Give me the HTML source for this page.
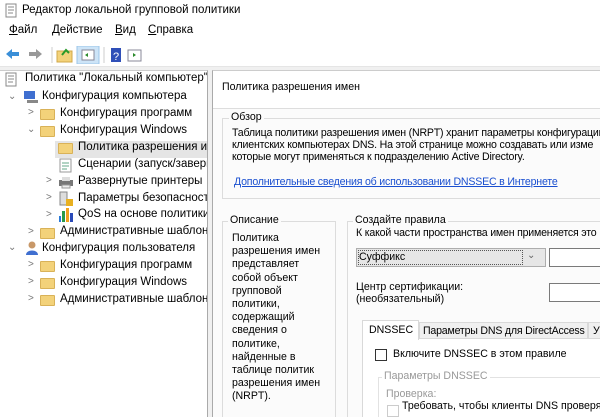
<!DOCTYPE html>
<html><head><meta charset="utf-8"><style>
*{margin:0;padding:0;box-sizing:border-box}
html,body{width:600px;height:417px;overflow:hidden}
body{background:#f0f0f0;font-family:"Liberation Sans","DejaVu Sans",sans-serif;font-size:11.5px;color:#000}
#w{position:relative;width:600px;height:417px;overflow:hidden}
.a{position:absolute;white-space:nowrap}
.s{font-size:10.6px}
.fold{position:absolute;width:15px;height:11px;background:#f3d27a;border:1px solid #d9b258;border-radius:1px}
.chev{position:absolute;font-size:10px;color:#777}
.gb{position:absolute;border:1px solid #dcdcdc}
.gl{position:absolute;background:#fbfbfb;padding:0 2px;font-size:10.6px}
</style></head><body><div id="w">
<div class="a" style="left:0;top:0;width:600px;height:22px;background:#fff"></div>
<svg class="a" style="left:4px;top:3px" width="14" height="15"><rect x="2" y="1" width="10" height="13" fill="#fff" stroke="#888"/><path d="M4 4h6M4 7h6M4 10h5" stroke="#888"/></svg>
<div class="a" style="left:22px;top:4px;font-size:11.5px">Редактор локальной групповой политики</div>
<div class="a" style="left:0;top:22px;width:600px;height:18px;background:#fff"></div>
<div class="a" style="left:9px;top:24px"><u>Ф</u>айл</div>
<div class="a" style="left:52px;top:24px"><u>Д</u>ействие</div>
<div class="a" style="left:115px;top:24px"><u>В</u>ид</div>
<div class="a" style="left:148px;top:24px"><u>С</u>правка</div>
<div class="a" style="left:0;top:40px;width:600px;height:27px;background:#fff;border-bottom:1px solid #e5e5e5"></div>
<svg class="a" style="left:4px;top:46px" width="140" height="18">
<path d="M2 8l6-5v3h7v4H8v3z" fill="#3a8fd8"/>
<path d="M38 8l-6-5v3h-7v4h7v3z" fill="#999"/>
<path d="M48 1v16" stroke="#ccc"/>
<rect x="53" y="5" width="15" height="11" fill="#f3d27a" stroke="#d0a848"/><path d="M58 9l4-5 3 3" stroke="#2a9a2a" stroke-width="2" fill="none"/>
<rect x="73" y="0" width="22" height="18" fill="#cde4f7" stroke="#9cc6ea"/><rect x="78" y="4" width="12" height="10" fill="#fff" stroke="#889"/><path d="M84 7l-3 2 3 2z" fill="#2a8a2a"/>
<path d="M100 1v16" stroke="#ccc"/>
<rect x="107" y="2" width="10" height="14" fill="#2f4fb8"/><text x="109" y="14" fill="#fff" font-size="11" font-family="Liberation Sans">?</text>
<rect x="124" y="4" width="13" height="11" fill="#fff" stroke="#889"/><path d="M129 7l3 2-3 2z" fill="#2a8a2a"/>
</svg>
<div class="a" style="left:0;top:70px;width:208px;height:347px;background:#fff;border-right:1px solid #aaa;border-top:1px solid #ccc;overflow:hidden">
<div class="a" style="left:55px;top:70px;width:152px;height:17px;background:#e5e5e5"></div>
</div>
<svg class="a" style="left:4px;top:72px" width="14" height="15"><rect x="2" y="1" width="10" height="13" fill="#fff" stroke="#888"/><path d="M4 4h6M4 7h6M4 10h5" stroke="#888"/></svg>
<div style="position:absolute;left:0;top:0;width:207px;height:417px;overflow:hidden">
<div class="a" style="left:25px;top:72px">Политика "Локальный компьютер"</div>
<div class="chev" style="left:8px;top:91px">&#8964;</div>
<svg class="a" style="left:23px;top:90px" width="16" height="14"><rect x="1" y="1" width="11" height="8" fill="#3f6fd0"/><rect x="4" y="10" width="11" height="3" fill="#888"/></svg>
<div class="a" style="left:42px;top:90px">Конфигурация компьютера</div>
<div class="chev" style="left:28px;top:107px">&gt;</div><div class="fold" style="left:40px;top:109px"></div>
<div class="a" style="left:60px;top:107px">Конфигурация программ</div>
<div class="chev" style="left:27px;top:124px">&#8964;</div><div class="fold" style="left:40px;top:126px"></div>
<div class="a" style="left:60px;top:124px">Конфигурация Windows</div>
<div class="fold" style="left:58px;top:143px"></div>
<div class="a" style="left:78px;top:141px">Политика разрешения и</div>
<svg class="a" style="left:59px;top:158px" width="14" height="15"><rect x="1" y="1" width="11" height="13" fill="#fff" stroke="#999"/><path d="M3 5h7M3 8h7M3 11h5" stroke="#6a8"/></svg>
<div class="a" style="left:78px;top:158px">Сценарии (запуск/заверш</div>
<div class="chev" style="left:46px;top:175px">&gt;</div>
<svg class="a" style="left:58px;top:176px" width="16" height="13"><rect x="1" y="4" width="14" height="6" fill="#777"/><rect x="4" y="1" width="8" height="4" fill="#ddd"/><rect x="4" y="9" width="8" height="3" fill="#eee" stroke="#999"/></svg>
<div class="a" style="left:78px;top:175px">Развернутые принтеры</div>
<div class="chev" style="left:46px;top:192px">&gt;</div>
<svg class="a" style="left:59px;top:191px" width="15" height="16"><rect x="1" y="1" width="7" height="13" fill="#ddd" stroke="#888"/><rect x="7" y="8" width="7" height="7" fill="#e8b020"/></svg>
<div class="a" style="left:78px;top:192px">Параметры безопасност</div>
<div class="chev" style="left:46px;top:209px">&gt;</div>
<svg class="a" style="left:58px;top:207px" width="16" height="16"><rect x="1" y="9" width="2" height="6" fill="#2a7ad8"/><rect x="4" y="4" width="3" height="11" fill="#2a9a4a"/><rect x="8" y="1" width="3" height="14" fill="#f0a020"/><rect x="12" y="6" width="3" height="9" fill="#2a4ab8"/></svg>
<div class="a" style="left:78px;top:208px">QoS на основе политики</div>
<div class="chev" style="left:28px;top:226px">&gt;</div><div class="fold" style="left:40px;top:228px"></div>
<div class="a" style="left:60px;top:225px">Административные шаблон</div>
<div class="chev" style="left:8px;top:242px">&#8964;</div>
<svg class="a" style="left:23px;top:240px" width="16" height="16"><circle cx="9" cy="5" r="3.5" fill="#c89868"/><path d="M3 15c0-6 12-6 12 0z" fill="#3f6fd0"/></svg>
<div class="a" style="left:42px;top:242px">Конфигурация пользователя</div>
<div class="chev" style="left:28px;top:259px">&gt;</div><div class="fold" style="left:40px;top:261px"></div>
<div class="a" style="left:60px;top:259px">Конфигурация программ</div>
<div class="chev" style="left:28px;top:276px">&gt;</div><div class="fold" style="left:40px;top:278px"></div>
<div class="a" style="left:60px;top:276px">Конфигурация Windows</div>
<div class="chev" style="left:28px;top:293px">&gt;</div><div class="fold" style="left:40px;top:295px"></div>
<div class="a" style="left:60px;top:293px">Административные шаблон</div>
</div>
<div style="position:absolute;left:212px;top:70px;width:388px;height:347px;overflow:hidden;background:#fbfbfb;border-left:1px solid #aaa;border-top:1px solid #ccc">
<div style="position:absolute;left:-213px;top:-71px;width:600px;height:417px">
<div class="a" style="left:213px;top:71px;width:387px;height:38px;background:#fff;border-bottom:1px solid #ddd"></div>
<div class="a s" style="left:222px;top:81px">Политика разрешения имен</div>
<div class="gb" style="left:222px;top:118px;width:390px;height:81px"></div>
<div class="gl" style="left:229px;top:111px">Обзор</div>
<div class="a s" style="left:232px;top:127px;line-height:12px;letter-spacing:-0.2px">Таблица политики разрешения имен (NRPT) хранит параметры конфигурации<br>клиентских компьютерах DNS. На этой странице можно создавать или изме<br>которые могут применяться к подразделению Active Directory.</div>
<div class="a s" style="left:234px;top:176px;color:#1a4fd0;text-decoration:underline;letter-spacing:-0.2px">Дополнительные сведения об использовании DNSSEC в Интернете</div>
<div class="gb" style="left:222px;top:221px;width:114px;height:200px"></div>
<div class="gl" style="left:228px;top:214px">Описание</div>
<div class="a s" style="left:232px;top:232px;line-height:13.2px">Политика<br>разрешения имен<br>представляет<br>собой объект<br>групповой<br>политики,<br>содержащий<br>сведения о<br>политике,<br>найденные в<br>таблице политик<br>разрешения имен<br>(NRPT).</div>
<div class="gb" style="left:347px;top:221px;width:260px;height:200px"></div>
<div class="gl" style="left:353px;top:214px">Создайте правила</div>
<div class="a s" style="left:356px;top:227px;letter-spacing:-0.2px">К какой части пространства имен применяется это</div>
<div class="a" style="left:356px;top:248px;width:190px;height:19px;background:#e6e6e6;border:1px solid #adadad"></div>
<div class="a" style="left:358px;top:250px;width:165px;height:15px;border:1px dotted #555"></div>
<div class="a s" style="left:359px;top:251px">Суффикс</div>
<div class="a" style="left:527px;top:250px;font-size:10px;color:#666">&#8964;</div>
<div class="a" style="left:549px;top:248px;width:60px;height:19px;background:#fff;border:1px solid #7a7a7a"></div>
<div class="a s" style="left:356px;top:281px;line-height:12px">Центр сертификации:<br>(необязательный)</div>
<div class="a" style="left:549px;top:283px;width:60px;height:19px;background:#fff;border:1px solid #7a7a7a"></div>
<div class="a" style="left:362px;top:338px;width:250px;height:90px;background:#fff;border:1px solid #d9d9d9"></div>
<div class="a" style="left:419px;top:322px;width:169px;height:17px;background:#f0f0f0;border:1px solid #d9d9d9"></div>
<div class="a" style="left:588px;top:322px;width:20px;height:17px;background:#f0f0f0;border:1px solid #d9d9d9"></div>
<div class="a" style="left:362px;top:320px;width:57px;height:20px;background:#fff;border:1px solid #d9d9d9;border-bottom:none"></div>
<div class="a s" style="left:369px;top:324px">DNSSEC</div>
<div class="a s" style="left:423px;top:325px;letter-spacing:-0.2px">Параметры DNS для DirectAccess</div>
<div class="a s" style="left:593px;top:325px">У</div>
<div class="a" style="left:375px;top:349px;width:12px;height:12px;border:1px solid #333;background:#fff"></div>
<div class="a s" style="left:393px;top:348px">Включите DNSSEC в этом правиле</div>
<div class="gb" style="left:378px;top:377px;width:230px;height:50px;border-color:#e2e2e2"></div>
<div class="gl" style="left:382px;top:370px;color:#999;background:#fff">Параметры DNSSEC</div>
<div class="a s" style="left:386px;top:388px;color:#999">Проверка:</div>
<div class="a" style="left:387px;top:405px;width:12px;height:12px;border:1px solid #ccc"></div>
<div class="a s" style="left:402px;top:400px">Требовать, чтобы клиенты DNS проверя</div>
</div></div>
</div></body></html>
